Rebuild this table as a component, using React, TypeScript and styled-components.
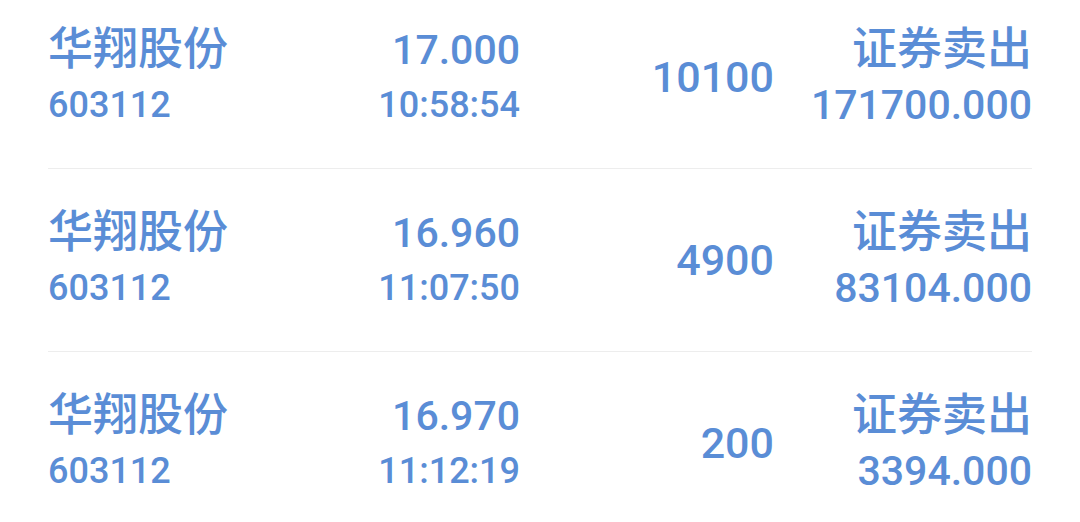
import styled, { createGlobalStyle } from 'styled-components';

interface Trade {
  name: string;
  code: string;
  price: string;
  time: string;
  volume: string;
  kind: string;
  amount: string;
}

const trades: Trade[] = [
  { name: '华翔股份', code: '603112', price: '17.000', time: '10:58:54', volume: '10100', kind: '证券卖出', amount: '171700.000' },
  { name: '华翔股份', code: '603112', price: '16.960', time: '11:07:50', volume: '4900', kind: '证券卖出', amount: '83104.000' },
  { name: '华翔股份', code: '603112', price: '16.970', time: '11:12:19', volume: '200', kind: '证券卖出', amount: '3394.000' },
];

const GlobalStyle = createGlobalStyle`
  html, body {
    margin: 0;
    padding: 0;
    background: #ffffff;
    overflow: hidden;
  }
  body {
    font-family: Roboto, 'Noto Sans CJK SC', sans-serif;
  }
`;

const List = styled.div`
  width: 1080px;
  height: 522px;
  overflow: hidden;
  padding: 0 48px;
  box-sizing: border-box;
  color: #5a8dd6;
`;

const Rows = styled.div`
  margin-top: -14px;
`;

const Row = styled.div`
  display: grid;
  grid-template-columns: 240px 232px 254px 258px;
  align-items: center;
  height: 182px;
  border-bottom: 1px solid #ededed;
`;

const Cell = styled.div<{ $right?: boolean }>`
  display: flex;
  flex-direction: column;
  align-items: ${(p) => (p.$right ? 'flex-end' : 'flex-start')};
`;

const Title = styled.div<{ $cjk?: boolean }>`
  font-size: ${(p) => (p.$cjk ? '45px' : '41px')};
  font-weight: 500;
  line-height: 56px;
  white-space: nowrap;
`;

const Sub = styled.div<{ $wide?: boolean }>`
  font-size: ${(p) => (p.$wide ? '41px' : '36px')};
  font-weight: 500;
  line-height: 54px;
  white-space: nowrap;
`;

const Volume = styled.div`
  font-size: 43px;
  font-weight: 500;
  line-height: 56px;
`;

const App = () => {
  return (
    <List>
      <GlobalStyle />
      <Rows>
        {trades.map((t) => (
          <Row key={t.time}>
            <Cell>
              <Title $cjk>{t.name}</Title>
              <Sub>{t.code}</Sub>
            </Cell>
            <Cell $right>
              <Title>{t.price}</Title>
              <Sub>{t.time}</Sub>
            </Cell>
            <Cell $right>
              <Volume>{t.volume}</Volume>
            </Cell>
            <Cell $right>
              <Title $cjk>{t.kind}</Title>
              <Sub $wide>{t.amount}</Sub>
            </Cell>
          </Row>
        ))}
      </Rows>
    </List>
  );
};

export default App;
